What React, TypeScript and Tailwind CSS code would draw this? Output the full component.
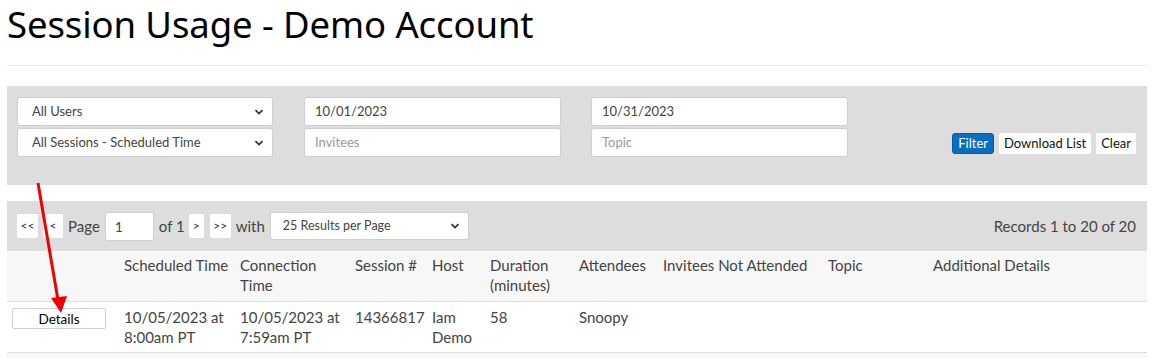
import React from 'react';

const Chevron = () => (
  <svg width="10" height="10" viewBox="0 0 10 10" className="shrink-0">
    <path d="M1.5 3.2 L5 6.6 L8.5 3.2" fill="none" stroke="#333" strokeWidth="1.8" />
  </svg>
);

const Select = ({ label, className = '' }: { label: string; className?: string }) => (
  <div
    className={`flex items-center justify-between bg-white border border-[#cfcfcf] rounded-[3px] pl-[14px] pr-[8px] text-[13px] text-[#444] ${className}`}
  >
    <span>{label}</span>
    <Chevron />
  </div>
);

const Field = ({ value, placeholder }: { value?: string; placeholder?: string }) => (
  <div className="flex items-center h-[29px] bg-white border border-[#cfcfcf] rounded-[3px] px-[10px] text-[13px]">
    {value ? <span className="text-[#444]">{value}</span> : <span className="text-[#999]">{placeholder}</span>}
  </div>
);

const PageBtn = ({ label, w }: { label: string; w: string }) => (
  <div className={`flex items-center justify-center h-[24px] ${w} bg-white rounded-[2px] text-[12px] text-[#333]`}>{label}</div>
);

const cols = [
  { w: 'w-[109px]', head: [''] },
  { w: 'w-[116px]', head: ['Scheduled Time'] },
  { w: 'w-[115px]', head: ['Connection', 'Time'] },
  { w: 'w-[77px]', head: ['Session #'] },
  { w: 'w-[58px]', head: ['Host'] },
  { w: 'w-[89px]', head: ['Duration', '(minutes)'] },
  { w: 'w-[84px]', head: ['Attendees'] },
  { w: 'w-[165px]', head: ['Invitees Not Attended'] },
  { w: 'w-[105px]', head: ['Topic'] },
  { w: 'flex-1', head: ['Additional Details'] },
];

const row = [
  null,
  ['10/05/2023 at', '8:00am PT'],
  ['10/05/2023 at', '7:59am PT'],
  ['14366817'],
  ['Iam', 'Demo'],
  ['58'],
  ['Snoopy'],
  [],
  [],
  [],
];

export default function App() {
  return (
    <div className="relative w-[1162px] h-[358px] bg-white overflow-hidden font-['Lato',sans-serif] text-[#333]">
      <div className="w-[1140px] ml-[7px]">
        <h1 className="h-[50px] text-[36.5px] leading-[48px] text-black font-['Noto_Sans',sans-serif] tracking-[-0.1px]">
          Session Usage - Demo Account
        </h1>
        <div className="mt-[15px] border-t border-[#e8e8e8]" />

        {/* filters */}
        <div className="mt-[20px] h-[99px] bg-[#dddddd] flex pl-[10px] pr-[11px] pt-[11px]">
          <div className="flex flex-col gap-[2px] w-[256px]">
            <Select label="All Users" className="h-[29px]" />
            <Select label="All Sessions - Scheduled Time" className="h-[29px]" />
          </div>
          <div className="flex flex-col gap-[2px] w-[257px] ml-[31px]">
            <Field value="10/01/2023" />
            <Field placeholder="Invitees" />
          </div>
          <div className="flex flex-col gap-[2px] w-[257px] ml-[30px]">
            <Field value="10/31/2023" />
            <Field placeholder="Topic" />
          </div>
          <div className="flex-1 flex justify-end items-start pt-[36px] gap-[5px] text-[13px]">
            <div className="h-[21px] px-[5px] flex items-center bg-[#0a6ebd] border border-[#075a9c] rounded-[3px] text-white">Filter</div>
            <div className="h-[21px] px-[5px] flex items-center bg-white rounded-[2px] text-[#111]">Download List</div>
            <div className="h-[21px] px-[5px] flex items-center bg-white rounded-[2px] text-[#111]">Clear</div>
          </div>
        </div>

        {/* pagination */}
        <div className="mt-[16px] h-[50px] bg-[#dddddd] flex items-center pl-[10px] pr-[11px] text-[15px] text-[#444]">
          <PageBtn label="<<" w="w-[21px]" />
          <div className="ml-[5px]"><PageBtn label="<" w="w-[20px]" /></div>
          <span className="ml-[5px]">Page</span>
          <div className="ml-[5px] h-[29px] w-[49px] bg-white border border-[#cfcfcf] rounded-[3px] flex items-center px-[9px] text-[14px]">1</div>
          <span className="ml-[5px]">of 1</span>
          <div className="ml-[4px]"><PageBtn label=">" w="w-[15px]" /></div>
          <div className="ml-[6px]"><PageBtn label=">>" w="w-[21px]" /></div>
          <span className="ml-[5px]">with</span>
          <Select label="25 Results per Page" className="ml-[5px] h-[28px] w-[199px] !text-[12.5px] !pl-[12px]" />
          <span className="ml-auto">Records 1 to 20 of 20</span>
        </div>

        {/* table */}
        <div className="flex h-[51px] bg-[#f7f7f7] border-b border-[#dedede] text-[15px] leading-[20px] text-[#444]">
          {cols.map((c, i) => (
            <div key={i} className={`${c.w} pl-[8px] pt-[4px]`}>
              {c.head.map((h, j) => (
                <div key={j}>{h}</div>
              ))}
            </div>
          ))}
        </div>
        <div className="flex h-[51px] border-b border-[#dedede] text-[15px] leading-[20px] text-[#444]">
          {cols.map((c, i) => (
            <div key={i} className={`${c.w} pl-[8px] pt-[5px]`}>
              {row[i] === null ? (
                <div className="-ml-[3px] mt-[1px] w-[94px] h-[21px] border border-[#d0d0d0] rounded-[2px] flex items-center justify-center text-[13.5px] text-black">
                  Details
                </div>
              ) : (
                row[i]!.map((t, j) => <div key={j}>{t}</div>)
              )}
            </div>
          ))}
        </div>
        <div className="h-[6px] bg-[#f7f7f7]" />
      </div>

      {/* annotation arrow */}
      <svg className="absolute left-0 top-0 pointer-events-none" width="1162" height="358">
        <line x1="38" y1="183" x2="58" y2="300" stroke="#f00000" strokeWidth="3" />
        <polygon points="51,298 67,296 61,313" fill="#f00000" />
      </svg>
    </div>
  );
}
